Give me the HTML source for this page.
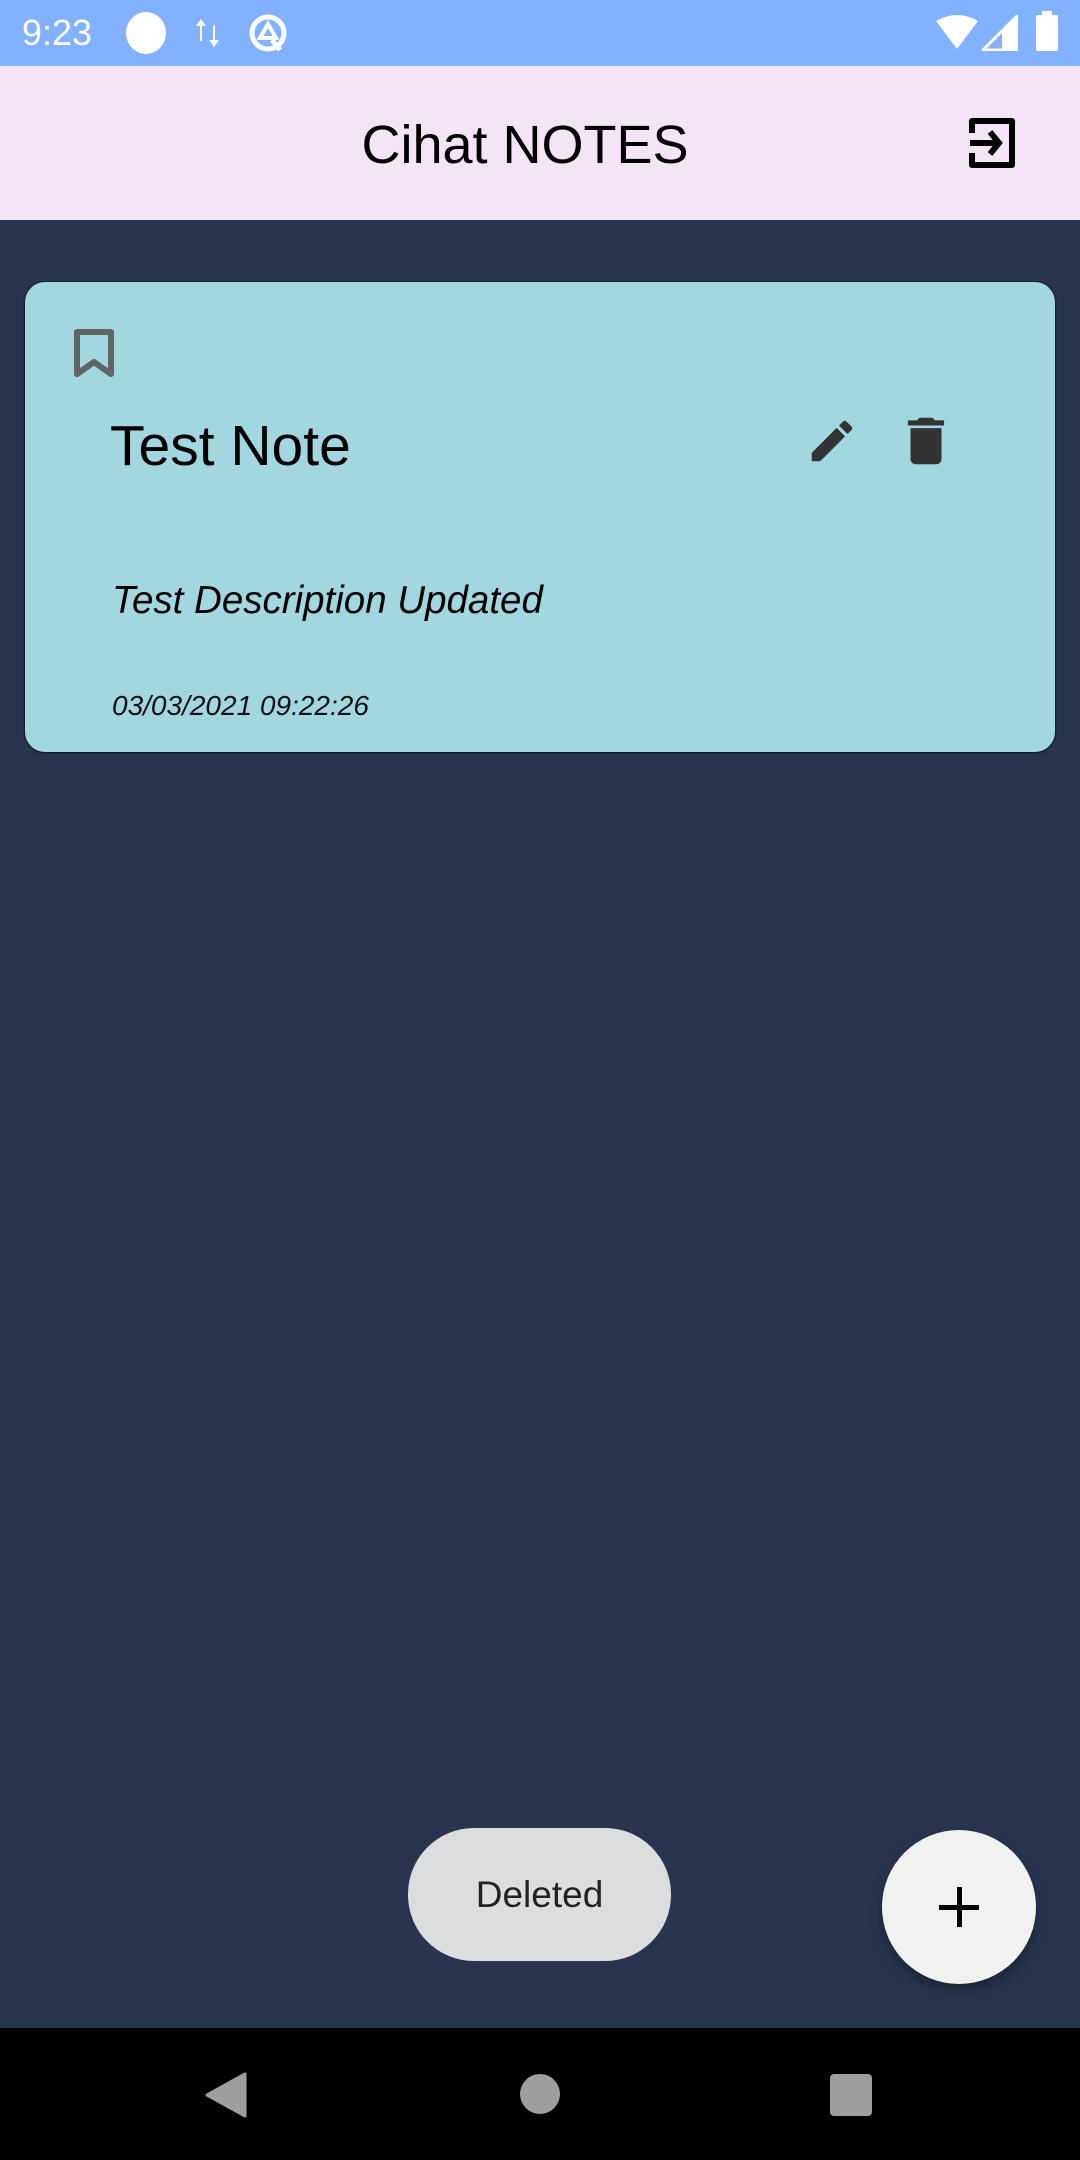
<!DOCTYPE html>
<html><head><meta charset="utf-8"><style>
*{margin:0;padding:0;box-sizing:border-box}
body{width:1080px;height:2160px;background:#29354f;font-family:"Liberation Sans",sans-serif;position:relative;overflow:hidden}
.abs{position:absolute}
#status{left:0;top:0;width:1080px;height:66px;background:#82b1ff}
#appbar{left:0;top:66px;width:1080px;height:154px;background:#f3e5f5}
#card{left:25px;top:282px;width:1030px;height:470px;background:#a3d7e0;border-radius:20px;box-shadow:0 0 0 1px rgba(0,0,0,.35),0 1px 3px rgba(0,0,0,.4)}
#nav{left:0;top:2028px;width:1080px;height:132px;background:#000}
</style></head><body>
<div id="status" class="abs">
  <div class="abs" style="left:22px;top:12px;color:#fff;font-size:36px">9:23</div>
  <div class="abs" style="left:126px;top:12px;width:40px;height:42px;border-radius:50%;background:#fff"></div>
  <svg class="abs" style="left:195px;top:17px" width="26" height="32" viewBox="0 0 26 32"><path d="M6 2 L1 9 H5 V24 H7 V9 H11 Z M19 30 L14 23 H18 V8 H20 V23 H24 Z" fill="#fff"/></svg>
  <svg class="abs" style="left:246px;top:12px" width="44" height="42" viewBox="0 0 44 42"><circle cx="22" cy="21" r="16" fill="none" stroke="#fff" stroke-width="5"/><path d="M14 26 L22 12 L30 26 Z" fill="none" stroke="#fff" stroke-width="4"/><path d="M26 28 L34 38" stroke="#fff" stroke-width="5"/></svg>
  <svg class="abs" style="left:936px;top:15px" width="42" height="36" viewBox="0 0 42 36"><path d="M0 6 Q21 -6 42 6 L21 34 Z" fill="#fff"/></svg>
  <svg class="abs" style="left:982px;top:15px" width="36" height="36" viewBox="0 0 36 36"><path d="M35 1 V35 H1 Z" fill="none" stroke="#fff" stroke-width="3"/><path d="M35 1 V35 H20 V18 Z" fill="#fff"/></svg>
  <div class="abs" style="left:1036px;top:15px;width:22px;height:36px;background:#fff;border-radius:2px"></div>
  <div class="abs" style="left:1042px;top:11px;width:10px;height:5px;background:#fff"></div>
</div>
<div id="appbar" class="abs">
  <div class="abs" style="left:0;width:1050px;top:48px;text-align:center;font-size:54px;color:#000">Cihat NOTES</div>
  <svg class="abs" style="left:964px;top:51px" width="54" height="52" viewBox="0 0 54 52"><path d="M8 16 V4 H48 V48 H8 V36" fill="none" stroke="#000" stroke-width="6" stroke-linejoin="round"/><path d="M6 26 H34 M26 15 L35 26 L26 37" fill="none" stroke="#000" stroke-width="6"/></svg>
</div>
<div id="card" class="abs">
  <svg class="abs" style="left:48px;top:46px" width="42" height="50" viewBox="0 0 42 50"><path d="M4 4 H38 V46 L21 34 L4 46 Z" fill="none" stroke="#5f6466" stroke-width="6" stroke-linejoin="round"/></svg>
  <div class="abs" style="left:85px;top:131px;font-size:57px;color:#000">Test Note</div>
  <svg class="abs" style="left:780px;top:132px" width="54" height="54" viewBox="0 0 24 24"><path d="M3 17.25V21h3.75L17.81 9.94l-3.75-3.75L3 17.25zM20.71 7.04a1 1 0 0 0 0-1.41l-2.34-2.34a1 1 0 0 0-1.41 0l-1.83 1.83 3.75 3.75 1.83-1.83z" fill="#333"/></svg>
  <svg class="abs" style="left:870px;top:128px" width="62" height="62" viewBox="0 0 24 24"><path d="M6 19c0 1.1.9 2 2 2h8c1.1 0 2-.9 2-2V7H6v12zM19 4h-3.5l-1-1h-5l-1 1H5v2h14V4z" fill="#333"/></svg>
  <div class="abs" style="left:87px;top:297px;font-size:38.5px;font-style:italic;color:#000">Test Description Updated</div>
  <div class="abs" style="left:87px;top:408px;font-size:28px;font-style:italic;color:#111">03/03/2021 09:22:26</div>
</div>
<div class="abs" style="left:408px;top:1828px;width:263px;height:133px;border-radius:66px;background:#dcdddf;text-align:center;line-height:133px;font-size:37px;color:#222">Deleted</div>
<div class="abs" style="left:882px;top:1830px;width:154px;height:154px;border-radius:50%;background:#f1f1f1;box-shadow:0 6px 12px rgba(0,0,0,.35)"></div>
<div class="abs" style="left:939px;top:1905px;width:40px;height:5px;background:#000"></div>
<div class="abs" style="left:957px;top:1887px;width:5px;height:40px;background:#000"></div>
<div id="nav" class="abs">
  <svg class="abs" style="left:205px;top:44px" width="42" height="46" viewBox="0 0 42 46"><path d="M40 2 V44 L2 23 Z" fill="#9e9e9e" stroke="#9e9e9e" stroke-width="3" stroke-linejoin="round"/></svg>
  <div class="abs" style="left:520px;top:46px;width:40px;height:40px;border-radius:50%;background:#9e9e9e"></div>
  <div class="abs" style="left:830px;top:46px;width:42px;height:42px;border-radius:4px;background:#9e9e9e"></div>
</div>
</body></html>
